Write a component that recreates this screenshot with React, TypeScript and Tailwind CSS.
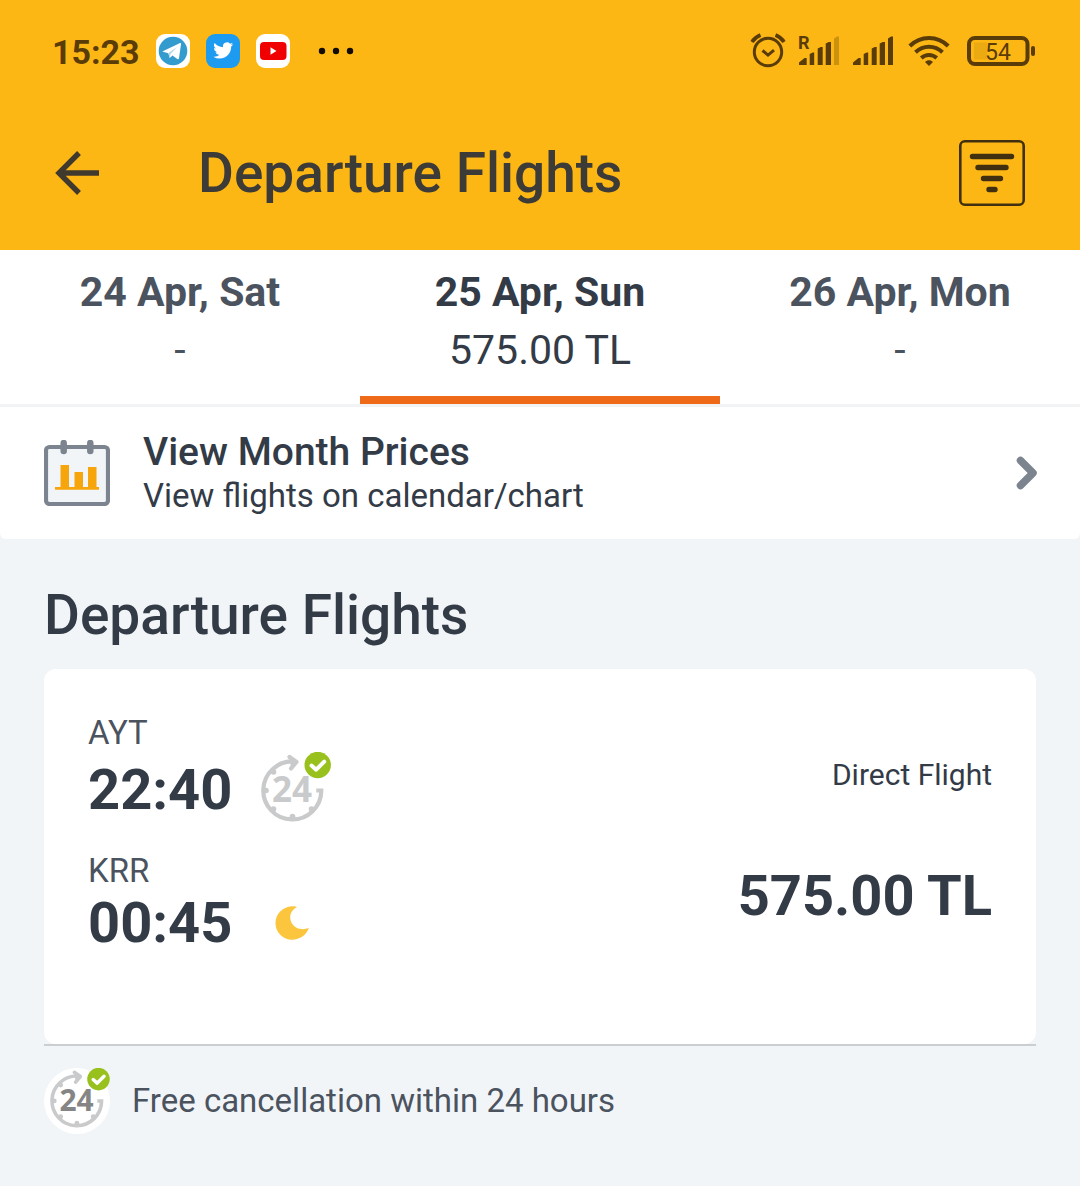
const days = [
  { id: 'sat', date: '24 Apr, Sat', price: '-' },
  { id: 'sun', date: '25 Apr, Sun', price: '575.00 TL', active: true },
  { id: 'mon', date: '26 Apr, Mon', price: '-' },
];

function TelegramIcon() {
  return (
    <svg viewBox="0 0 34 34" className="size-[34px]" aria-hidden="true">
      <rect width="34" height="34" rx="9" fill="#fff" />
      <circle cx="17" cy="17" r="14.3" fill="#349bcf" />
      <path d="M6.800 17.300 23.600 9.200c1-.4 1.600.2 1.400 1.100L23 24.300c-.2.900-1 1.100-1.700.6l-4.800-3.400-2.800 2.500-1.400-4.800-5.300-1.500c-.8-.2-.8-.1-.2-.4Z" fill="#fff" />
      <path d="m12.500 18.900 8.600-6-6.600 7-.8 4Z" fill="#b5d5e8" />
    </svg>
  );
}

function TwitterIcon() {
  return (
    <svg viewBox="0 0 34 34" className="size-[34px]" aria-hidden="true">
      <rect width="34" height="34" rx="9" fill="#1d9bf0" />
      <g transform="translate(7.300 6.500) scale(.83)" fill="#fff">
        <path d="M23.95 4.57a10 10 0 0 1-2.82.77 4.96 4.96 0 0 0 2.16-2.72c-.95.55-2 .95-3.13 1.18a4.92 4.92 0 0 0-8.38 4.48C7.69 8.1 4.07 6.13 1.64 3.16a4.92 4.92 0 0 0 1.52 6.57 4.9 4.9 0 0 1-2.23-.61v.06a4.92 4.92 0 0 0 3.95 4.83 5 5 0 0 1-2.21.08 4.94 4.94 0 0 0 4.6 3.42A9.87 9.87 0 0 1 0 19.54a13.99 13.99 0 0 0 7.55 2.21c9.05 0 14-7.5 14-13.99 0-.21 0-.42-.02-.63a9.94 9.94 0 0 0 2.46-2.55Z" />
      </g>
    </svg>
  );
}

function YoutubeIcon() {
  return (
    <svg viewBox="0 0 34 34" className="size-[34px]" aria-hidden="true">
      <rect width="34" height="34" rx="9" fill="#fff" />
      <rect x="4" y="8" width="26.5" height="18" rx="4" fill="#f00000" />
      <path d="M14.500 13.200v7.600l6-3.800Z" fill="#fff" />
    </svg>
  );
}

function AlarmIcon() {
  return (
    <svg viewBox="0 0 36 36" className="size-9" fill="none" stroke="currentColor" strokeWidth="3" aria-hidden="true">
      <circle cx="18" cy="19" r="13.700" />
      <path d="m12.500 17.500 5.500 4.600 6-5" />
      <path d="M2 9Q4.800 4.300 10.500 2M34 9Q31.200 4.300 25.500 2" strokeWidth="3.600" />
    </svg>
  );
}

function SignalIcon({ roaming = false }: { roaming?: boolean }) {
  return (
    <svg viewBox="0 0 42 34" className="h-[34px] w-[42px] overflow-visible" fill="currentColor" aria-hidden="true">
      <path d="M1 31v-2.500l5.500-4.500H8.700V31ZM11.700 31V20l3-1.500h1.500V31ZM19.700 31V14.500l3-1.500h2V31ZM27.700 31V9.500l3-1.500h2.300V31Z" />
      <path d="M36 31V4.500L39 2.500h2V31Z" opacity={roaming ? 0.3 : 1} />
      {roaming && (
        <text x="0" y="15" fontFamily="Roboto, sans-serif" fontSize="18" fontWeight="700">R</text>
      )}
    </svg>
  );
}

function WifiIcon() {
  return (
    <svg viewBox="0 0 42 32" className="h-8 w-[42px]" fill="none" stroke="currentColor" strokeWidth="4" aria-hidden="true">
      <path d="M1.800 11C12.500.2 29.500.2 40.200 11" />
      <path d="M7.500 17.200c7.700-7.400 19.300-7.400 27 0" />
      <path d="M13.300 23c4.500-4 10.900-4 15.400 0" />
      <path d="m17 27 4 4 4-4c-2.400-2.200-5.600-2.200-8 0Z" fill="currentColor" stroke="none" />
    </svg>
  );
}

function BatteryIcon() {
  return (
    <svg viewBox="0 0 70 32" className="h-8 w-[70px]" aria-hidden="true">
      <rect x="3" y="3" width="58.500" height="26" rx="6" fill="none" stroke="currentColor" strokeWidth="4" />
      <rect x="8" y="7.500" width="13" height="17" fill="currentColor" opacity=".1" />
      <rect x="65" y="11" width="4" height="10" rx="2" fill="currentColor" />
      <text x="32" y="24.500" textAnchor="middle" fontFamily="Roboto, sans-serif" fontSize="23" fontWeight="400" fill="currentColor">54</text>
    </svg>
  );
}

function CalendarChartIcon() {
  return (
    <svg viewBox="0 0 66 66" className="size-[66px] shrink-0" aria-hidden="true">
      <rect x="2" y="7" width="62" height="57" rx="3.500" fill="#f2f5f8" stroke="#7c858f" strokeWidth="4.200" />
      <path d="M19.700 3v8M46.300 3v8" stroke="#7c858f" strokeWidth="6.500" strokeLinecap="round" />
      <path d="M11 47h5.500V25H25v22h5.500V32H39v15h5V27h8.500v20H55v2.800H11Z" fill="#f7a50c" />
    </svg>
  );
}

function Clock24Icon({ className, ink }: { className: string; ink: string }) {
  return (
    <svg viewBox="0 0 71 76" className={className} aria-hidden="true">
      <path d="M34 9.500A29 29 0 1 0 61.300 38.500h-5" fill="none" stroke="#c9cacb" strokeWidth="4.200" />
      <path d="m29.500 5 7 5-5.500 6.500" fill="#c9cacb" stroke="#c9cacb" strokeWidth="4.200" strokeLinejoin="round" strokeLinecap="round" />
      <g fill="#c9cacb">
        <circle cx="13.500" cy="20" r="2.800" />
        <circle cx="6" cy="38.500" r="2.800" />
        <circle cx="13.500" cy="57" r="2.800" />
        <circle cx="32.500" cy="64.500" r="2.800" />
        <circle cx="51.500" cy="57" r="2.800" />
      </g>
      <text x="32" y="50" textAnchor="middle" fontFamily="'Open Sans', sans-serif" fontSize="35" fontWeight="700" fill={ink}>24</text>
      <circle cx="57.700" cy="13" r="13.200" fill="#98c11d" />
      <path d="m51.500 13.500 4.700 4.200 8-8" fill="none" stroke="#fff" strokeWidth="4" strokeLinecap="round" strokeLinejoin="round" />
    </svg>
  );
}

function StatusBar() {
  return (
    <div className="flex h-24 items-center justify-between pt-1.5 pr-11 pl-[52px] text-[#5a3c08]">
      <div className="flex items-center gap-4">
        <span className="pt-0.5 text-[34px] leading-none font-bold">15:23</span>
        <TelegramIcon />
        <TwitterIcon />
        <YoutubeIcon />
        <svg viewBox="0 0 36 8" className="ml-3 h-2 w-9" fill="#120c00" aria-hidden="true">
          <circle cx="4" cy="4" r="3.200" />
          <circle cx="18" cy="4" r="3.200" />
          <circle cx="32" cy="4" r="3.200" />
        </svg>
      </div>
      <div className="flex items-center gap-3">
        <AlarmIcon />
        <SignalIcon roaming />
        <SignalIcon />
        <div className="flex items-center gap-4 pl-0.5">
          <WifiIcon />
          <BatteryIcon />
        </div>
      </div>
    </div>
  );
}

export default function App() {
  return (
    <div className="min-h-screen bg-[#f2f5f8] font-['Roboto',sans-serif] text-[#333b47]">
      <header className="bg-[#fdb714]">
        <StatusBar />
        <div className="flex h-[154px] items-center pr-[55px] pl-[54px]">
          <button type="button" aria-label="Back">
            <svg viewBox="0 0 46 46" className="size-[46px]" fill="none" stroke="#40392e" strokeWidth="5.400" aria-hidden="true">
              <path d="M45 23H5M25 3 5 23l20 20" />
            </svg>
          </button>
          <h1 className="ml-[98px] flex-1 text-[55px] leading-16 font-medium text-[#3d3b38]">Departure Flights</h1>
          <button type="button" aria-label="Filter flights">
            <svg viewBox="0 0 66 66" className="size-[66px]" fill="none" stroke="#40300f" aria-hidden="true">
              <rect x="1.300" y="1.300" width="63.400" height="63.400" rx="4.500" strokeWidth="2.600" />
              <path d="M13.500 16.500h39M19 27.500h28M24.500 38.500h17M30 49.500h6" strokeWidth="5.400" strokeLinecap="round" />
            </svg>
          </button>
        </div>
      </header>

      <nav aria-label="Departure date" className="grid grid-cols-3 border-b-3 border-[#f2f3f5] bg-white">
        {days.map((day) => (
          <button
            key={day.id}
            type="button"
            aria-pressed={Boolean(day.active)}
            className={
              day.active
                ? 'flex flex-col items-center border-b-8 border-[#ef6a18] pt-[13px] pb-[17px] text-[#333b47]'
                : 'flex flex-col items-center border-b-8 border-transparent pt-[13px] pb-[17px] text-[#4b535f]'
            }
          >
            <span className="text-[41px] leading-[58px] font-bold">{day.date}</span>
            <span className="text-[41px] leading-[58px]">{day.price}</span>
          </button>
        ))}
      </nav>

      <button type="button" className="flex h-[132px] w-full items-center rounded-b-md bg-white pr-[42px] pl-11 text-left">
        <CalendarChartIcon />
        <span className="ml-[33px] flex flex-1 flex-col pt-0.5">
          <span className="text-[39px] leading-[43px] font-medium">View Month Prices</span>
          <span className="text-[33px] leading-[43px]">View flights on calendar/chart</span>
        </span>
        <svg viewBox="0 0 22 36" className="h-9 w-[22px]" fill="none" stroke="#7c858f" strokeWidth="7.500" strokeLinecap="round" strokeLinejoin="round" aria-hidden="true">
          <path d="m4.500 5.500 12.500 12.500L4.500 30.500" />
        </svg>
      </button>

      <main className="px-11 pt-11">
        <h2 className="text-[55px] leading-16 font-medium">Departure Flights</h2>

        <div className="mt-[22px] border-b-2 border-[#cbced1]">
          <article className="flex justify-between rounded-xl bg-white px-11 pt-11 pb-[90px]">
            <div>
              <p className="text-[33px] leading-10 text-[#4b535f]">AYT</p>
              <div className="flex h-[74px] items-center gap-7">
                <span className="text-[56px] leading-16 font-bold">22:40</span>
                <Clock24Icon className="h-[76px] w-[71px]" ink="#c9cacb" />
              </div>
              <p className="mt-6 text-[33px] leading-10 text-[#4b535f]">KRR</p>
              <div className="flex h-[63px] items-center gap-[43px]">
                <span className="text-[56px] leading-16 font-bold">00:45</span>
                <svg viewBox="0 0 34 34" className="size-[34px]" fill="#fbc63e" aria-label="Night flight" role="img">
                  <path d="M19.500.3C9-.3.500 7 .500 17A16.500 16.500 0 0 0 17 33.700C25 33.700 31.500 29 33.800 22 C28 24.300 20.500 23.300 17 17.500 C13.500 11.500 15.200 4.500 22 1.100Z" />
                </svg>
              </div>
            </div>
            <div className="flex flex-col items-end pt-[42px]">
              <p className="text-[30px] leading-10">Direct Flight</p>
              <p className="mt-[69px] text-[56px] leading-16 font-bold">575.00 TL</p>
            </div>
          </article>
        </div>

        <div className="mt-[22px] flex items-center gap-[22px]">
          <span className="flex size-[66px] items-start justify-end rounded-full bg-white">
            <Clock24Icon className="h-[65px] w-[61px]" ink="#858585" />
          </span>
          <p className="text-[33px] leading-10 text-[#4b535f]">Free cancellation within 24 hours</p>
        </div>
      </main>
    </div>
  );
}
